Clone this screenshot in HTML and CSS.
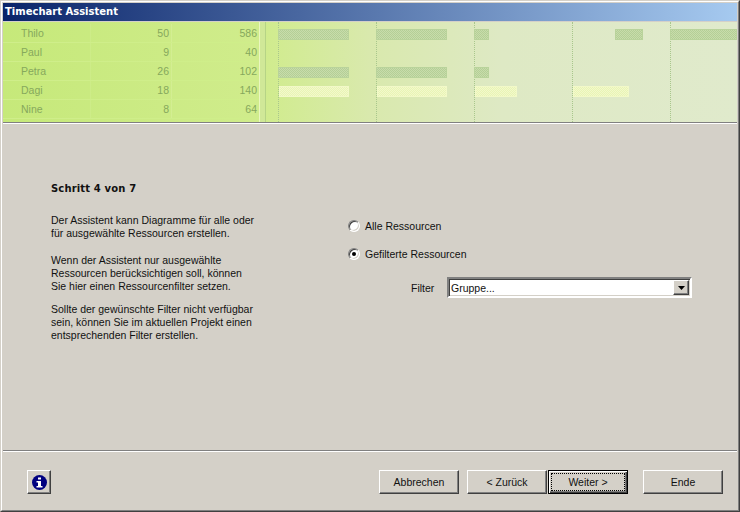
FILE: index.html
```html
<!DOCTYPE html>
<html lang="de">
<head>
<meta charset="utf-8">
<title>Timechart Assistent</title>
<link rel="stylesheet" href="styles.css">
</head>
<body>
<div class="window">
  <div class="frame">
    <div class="titlebar">Timechart Assistent</div>
    <div class="chart">
      <div class="table">
        <div class="row"><span class="c-name">Thilo</span><span class="c-a">50</span><span class="c-b">586</span></div>
        <div class="row"><span class="c-name">Paul</span><span class="c-a">9</span><span class="c-b">40</span></div>
        <div class="row"><span class="c-name">Petra</span><span class="c-a">26</span><span class="c-b">102</span></div>
        <div class="row"><span class="c-name">Dagi</span><span class="c-a">18</span><span class="c-b">140</span></div>
        <div class="row"><span class="c-name">Nine</span><span class="c-a">8</span><span class="c-b">64</span></div>
      </div>
      <div class="splitter"></div>
      <div class="gantt">
        <div class="week"></div><div class="week"></div><div class="week"></div><div class="week"></div><div class="week"></div>
        <div class="bar" style="left:12px;top:7px;width:71px"></div>
        <div class="bar" style="left:110px;top:7px;width:71px"></div>
        <div class="bar" style="left:208px;top:7px;width:15px"></div>
        <div class="bar" style="left:349px;top:7px;width:28px"></div>
        <div class="bar" style="left:404px;top:7px;width:67px"></div>
        <div class="bar" style="left:12px;top:45px;width:71px"></div>
        <div class="bar" style="left:110px;top:45px;width:71px"></div>
        <div class="bar" style="left:208px;top:45px;width:15px"></div>
        <div class="bar bar-light" style="left:13px;top:64px;width:70px"></div>
        <div class="bar bar-light" style="left:111px;top:64px;width:70px"></div>
        <div class="bar bar-light" style="left:209px;top:64px;width:42px"></div>
        <div class="bar bar-light" style="left:307px;top:64px;width:56px"></div>
      </div>
    </div>
    <div class="rule"></div>
    <div class="content">
      <div class="intro">
        <h1 class="step">Schritt 4 von 7</h1>
        <p class="para para-1">Der Assistent kann Diagramme für alle oder<br>für ausgewählte Ressourcen erstellen.</p>
        <p class="para para-2">Wenn der Assistent nur ausgewählte<br>Ressourcen berücksichtigen soll, können<br>Sie hier einen Ressourcenfilter setzen.</p>
        <p class="para para-3">Sollte der gewünschte Filter nicht verfügbar<br>sein, können Sie im aktuellen Projekt einen<br>entsprechenden Filter erstellen.</p>
      </div>
      <div class="options">
        <div class="radio-row"><span class="radio"></span><span>Alle Ressourcen</span></div>
        <div class="radio-row"><span class="radio radio-on"></span><span>Gefilterte Ressourcen</span></div>
        <div class="filter-row">
          <span class="filter-label">Filter</span>
          <div class="combo">
            <span class="combo-text">Gruppe...</span>
            <span class="combo-btn"><svg width="7" height="4" viewBox="0 0 7 4"><path d="M0 0h7L3.500 4z" fill="#000"/></svg></span>
          </div>
        </div>
      </div>
    </div>
    <div class="rule"></div>
    <div class="footer">
      <button class="btn btn-info" type="button" aria-label="Info">
        <svg width="15" height="15" viewBox="0 0 15 15"><circle cx="7.500" cy="7.500" r="7.500" fill="#000080"/><rect x="6" y="2.500" width="3" height="2" fill="#fff"/><path d="M4.500 6h4.500v5h1.500v1.500h-6V11H6V7.500H4.500z" fill="#fff"/></svg>
      </button>
      <div class="nav">
        <button class="btn" type="button">Abbrechen</button>
        <div class="pair">
          <button class="btn" type="button">&lt; Zurück</button>
          <button class="btn btn-default" type="button"><span class="focus">Weiter &gt;</span></button>
        </div>
        <button class="btn" type="button">Ende</button>
      </div>
    </div>
  </div>
</div>
</body>
</html>
```
FILE: styles.css
```css
* { box-sizing: border-box; }
html, body { margin: 0; padding: 0; }
body { width: 740px; height: 512px; overflow: hidden; font-family: "Liberation Sans", Arial, sans-serif; font-size: 10.5px; color: #000; }

.window { width: 740px; height: 512px; border: 1px solid; border-color: #d4d0c8 #404040 #404040 #d4d0c8; }
.frame { height: 100%; display: flex; flex-direction: column; background: #d4d0c8; border: 1px solid; border-color: #fff #808080 #808080 #fff; padding: 1px; }

.titlebar { height: 18px; flex: none; padding-left: 2px; line-height: 17px; color: #fff; font-family: "DejaVu Sans", sans-serif; font-weight: 700; font-size: 10px; background: linear-gradient(90deg, #0a246a, #a6caf0); }

.chart { margin-top: 1px; height: 100px; flex: none; display: flex; background: linear-gradient(90deg, #c6e97a 0%, #d0ec8c 35%, #d9e9ad 50%, #dee9c4 68%, #e0eacc 100%); color: #86a85c; font-size: 10.5px; }
.table { width: 257px; flex: none; padding-top: 2px; border-right: 1px solid #eaf6c0; }
.row { height: 19px; display: grid; grid-template-columns: 88px 81px 88px; align-items: stretch; line-height: 18px; border-bottom: 1px solid #cfee8a; }
.c-name { padding-left: 18px; border-right: 1px solid #cdec88; }
.c-a, .c-b { text-align: right; padding-right: 3px; }
.c-a { padding-right: 2px; border-right: 1px solid #d3ee92; }
.splitter { width: 6px; flex: none; background: linear-gradient(90deg, #d0e898 0, #d0e898 5px, #b6d486 5px, #b6d486 6px); }
.gantt { position: relative; flex: 1; display: flex; padding-left: 12px; }
.week { width: 98px; flex: none; border-left: 1px dotted #a9c78c; }
.bar { position: absolute; height: 11px; border: 1px solid #b9d39b; background-color: #c8dcab; background-image: conic-gradient(#b4cf96 25%, transparent 0 50%, #b4cf96 0 75%, transparent 0); background-size: 2px 2px; }
.bar-light { border-color: #f2f9c8; background-color: #e9f5b4; background-image: conic-gradient(#f2f8cc 25%, transparent 0 50%, #f2f8cc 0 75%, transparent 0); }

.rule { height: 2px; flex: none; border-top: 1px solid #808080; border-bottom: 1px solid #fff; }

.content { flex: 1; display: flex; padding: 58px 0 0 48px; color: #111; }
.intro { width: 297px; flex: none; }
.step { margin: 0 0 19px; font-family: "DejaVu Sans", sans-serif; font-size: 10px; font-weight: 700; line-height: 13px; letter-spacing: 0.15px; }
.para { margin: 0; line-height: 13px; }
.para-2 { margin-top: 14px; }
.para-3 { margin-top: 10px; }

.options { padding-top: 37px; flex: 1; }
.radio-row { display: flex; align-items: center; gap: 5px; height: 14px; margin-bottom: 14px; }
.radio { position: relative; width: 12px; height: 12px; border-radius: 50%; background: #fff; border: 1px solid; border-color: #808080 #fff #fff #808080; box-shadow: inset 1px 1px #404040, inset -1px -1px #d4d0c8; }
.radio-on::after { content: ""; position: absolute; left: 3px; top: 3px; width: 4px; height: 4px; border-radius: 50%; background: #000; }
.filter-row { display: flex; align-items: center; margin: 16px 0 0 63px; }
.filter-label { width: 36px; }
.combo { width: 245px; height: 21px; display: flex; align-items: center; background: #fff; border: 2px solid; border-color: #808080 #fff #fff #808080; box-shadow: inset 1px 1px #404040, inset -1px -1px #d4d0c8; padding: 1px; }
.combo-text { flex: 1; padding-left: 1px; }
.combo-btn { width: 16px; height: 15px; display: flex; align-items: center; justify-content: center; background: #d4d0c8; border: 1px solid; border-color: #fff #404040 #404040 #fff; box-shadow: inset -1px -1px #808080; }

.footer { height: 57px; flex: none; display: flex; justify-content: space-between; align-items: flex-start; padding: 18px 14px 0 24px; }
.nav { display: flex; gap: 8px; }
.pair { display: flex; gap: 1px; margin-right: 7px; }
.btn { width: 80px; height: 24px; padding: 0; display: flex; align-items: center; justify-content: center; font: inherit; color: #111; background: #d4d0c8; border: 1px solid; border-color: #fff #404040 #404040 #fff; box-shadow: inset -1px -1px #808080; }
.btn-info { width: 24px; }
.btn-default { border: 1px solid #000; box-shadow: inset 1px 1px #fff, inset -1px -1px #404040, inset -2px -2px #808080; }
.focus { display: flex; width: 72px; height: 16px; align-items: center; justify-content: center; outline: 1px dotted #000; }
```
